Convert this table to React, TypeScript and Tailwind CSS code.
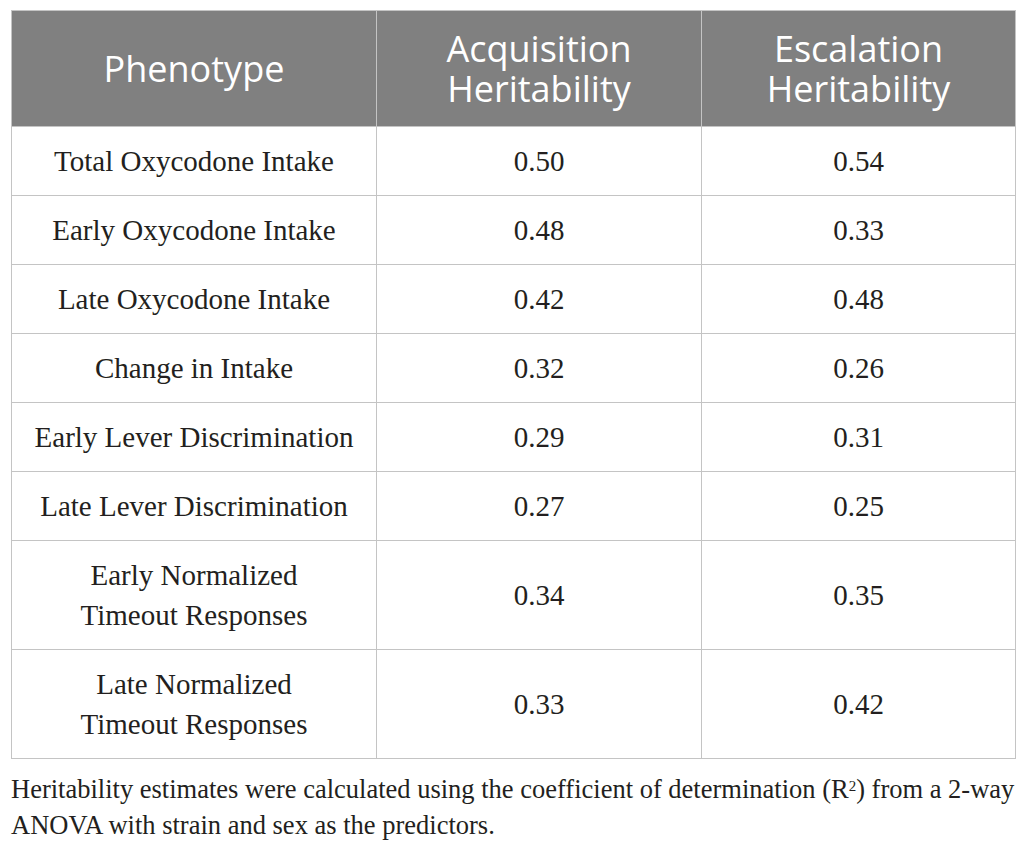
const rows: [string[], string, string][] = [
  [["Total Oxycodone Intake"], "0.50", "0.54"],
  [["Early Oxycodone Intake"], "0.48", "0.33"],
  [["Late Oxycodone Intake"], "0.42", "0.48"],
  [["Change in Intake"], "0.32", "0.26"],
  [["Early Lever Discrimination"], "0.29", "0.31"],
  [["Late Lever Discrimination"], "0.27", "0.25"],
  [["Early Normalized", "Timeout Responses"], "0.34", "0.35"],
  [["Late Normalized", "Timeout Responses"], "0.33", "0.42"],
];

export default function App() {
  return (
    <div className="min-h-[847px] w-[1026px] bg-white px-[11px] pt-[10px]">
      <table className="w-[1004px] table-fixed border-collapse border border-[#c4c4c4]">
        <colgroup>
          <col className="w-[365px]" />
          <col className="w-[325px]" />
          <col className="w-[314px]" />
        </colgroup>
        <thead>
          <tr className="h-[116px] bg-[#808080] font-['Open_Sans',sans-serif] text-[36px] leading-[40px] text-white">
            <th className="border border-[#c4c4c4] font-normal">Phenotype</th>
            <th className="border border-[#c4c4c4] font-normal">
              Acquisition
              <br />
              Heritability
            </th>
            <th className="border border-[#c4c4c4] font-normal">
              Escalation
              <br />
              Heritability
            </th>
          </tr>
        </thead>
        <tbody className="font-['Liberation_Serif',serif] text-[29px] leading-[40px] text-[#231f20]">
          {rows.map(([label, a, b]) => (
            <tr key={label.join(" ")} className={label.length > 1 ? "h-[109px]" : "h-[69px]"}>
              <td className="border border-[#c4c4c4] text-center">
                {label.map((l) => (
                  <div key={l}>{l}</div>
                ))}
              </td>
              <td className="border border-[#c4c4c4] text-center">{a}</td>
              <td className="border border-[#c4c4c4] text-center">{b}</td>
            </tr>
          ))}
        </tbody>
      </table>
      <p className="mt-[12px] font-['Liberation_Serif',serif] text-[26.5px] leading-[36px] text-[#231f20]">
        Heritability estimates were calculated using the coefficient of determination (R
        <sup className="text-[15px]">2</sup>) from a 2-way ANOVA with strain and sex as the
        predictors.
      </p>
    </div>
  );
}
